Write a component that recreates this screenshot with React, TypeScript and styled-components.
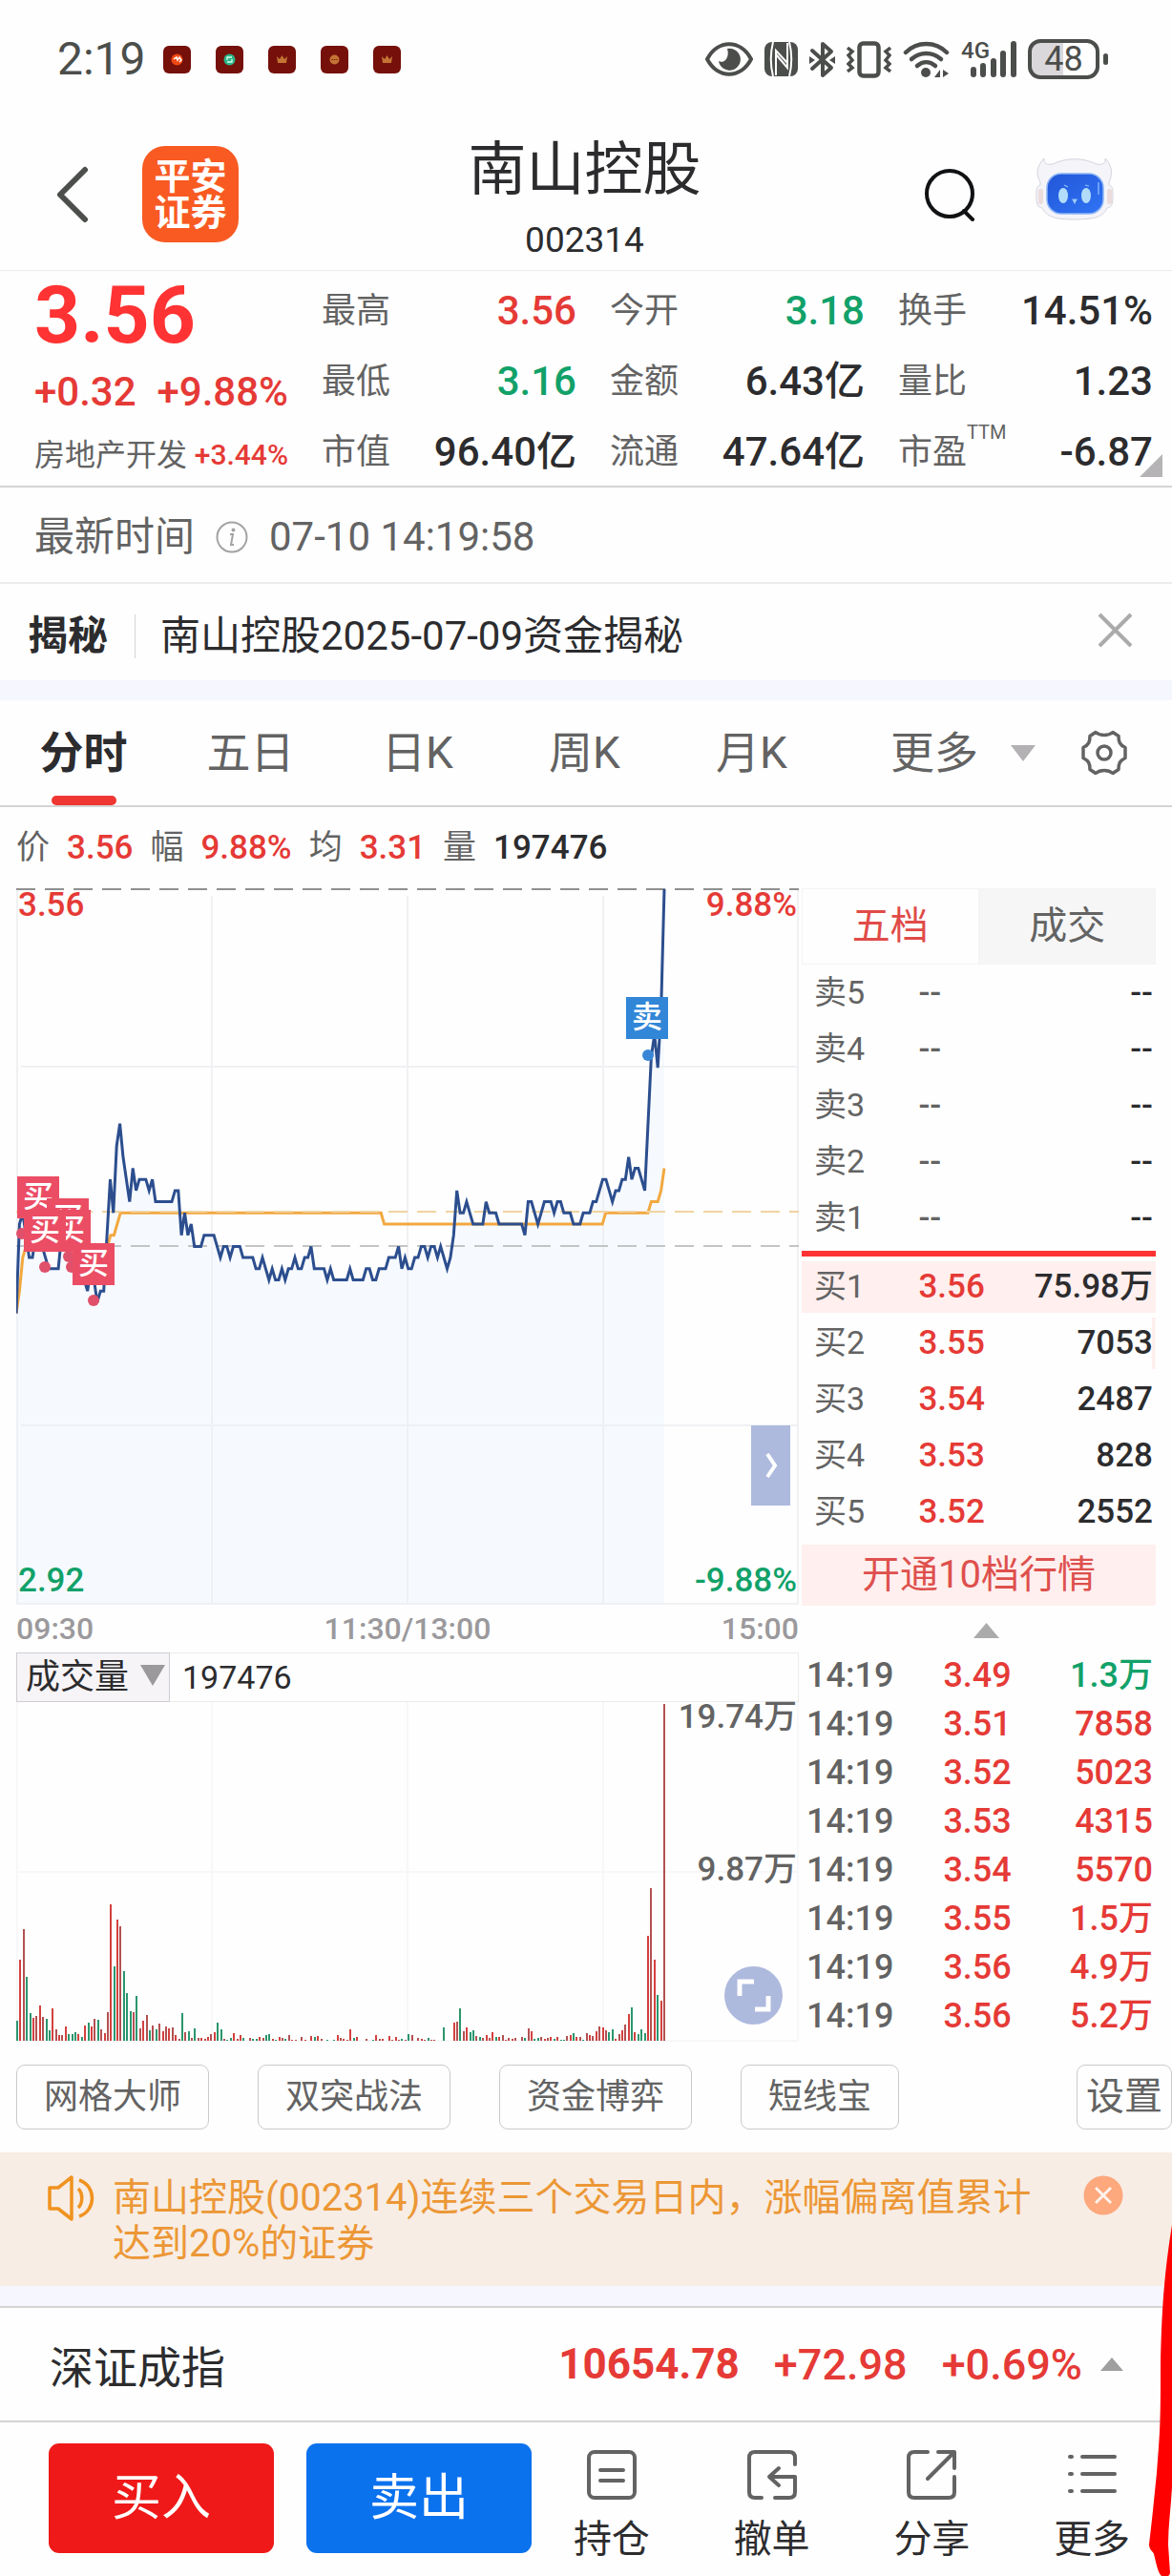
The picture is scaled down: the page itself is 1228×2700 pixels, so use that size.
import React from 'react';
import styled, { createGlobalStyle, css } from 'styled-components';

const color = {
  red: '#e53a36',
  strongRed: '#ff3333',
  green: '#11a169',
  ink: '#2c2c2e',
  grey: '#636363',
  faint: '#9b999c',
  status: '#4b4e4b',
  line: '#d4d4d4',
  hair: '#ececec',
  band: '#f5f6fe',
  pink: '#ffefee',
  lilac: '#adb9dd',
};

type Tone = 'red' | 'green' | 'ink' | 'grey';

const GlobalStyle = createGlobalStyle`
  * { box-sizing: border-box; }
  body {
    margin: 0;
    background: #fefefe;
    color: ${color.ink};
    font-family: Roboto, "Noto Sans CJK SC", sans-serif;
  }
  button, select {
    font: inherit;
    color: inherit;
    margin: 0;
    padding: 0;
    border: 0;
    background: none;
  }
  button { cursor: pointer; }
  h1, p { margin: 0; font-weight: 400; }
  svg { display: block; flex: none; }
  table { border-collapse: collapse; width: 100%; }
  td, th { padding: 0; font-weight: 400; text-align: left; }
`;

const Page = styled.div`
  position: relative;
  overflow: hidden;
`;

/* ---------- status bar ---------- */

const StatusBar = styled.div`
  display: flex;
  align-items: center;
  height: 124px;
  padding: 0 76px 0 60px;
  color: ${color.status};
`;

const Clock = styled.span`
  width: 111px;
  font-size: 48px;
  line-height: 60px;
`;

const Notifications = styled.div`
  display: flex;
  gap: 26px;
  flex: 1;
`;

const Signals = styled.div`
  display: flex;
  align-items: center;
  gap: 12px;
`;

const Cell = styled.div`
  display: flex;
  align-items: flex-start;
  height: 40px;
`;

const Network = styled.span`
  font-size: 24px;
  line-height: 22px;
  font-weight: 500;
  margin-right: -20px;
`;

const Battery = styled.span`
  position: relative;
  width: 75px;
  height: 42px;
  border: 4px solid ${color.status};
  border-radius: 13px;
  background: linear-gradient(90deg, #dbd8db 50%, #fefefe 50%);
  font-size: 36px;
  line-height: 34px;
  text-align: center;
  &::after {
    content: '';
    position: absolute;
    right: -13px;
    top: 11px;
    width: 5px;
    height: 12px;
    border-radius: 3px;
    background: ${color.status};
  }
`;

/* ---------- header ---------- */

const Header = styled.header`
  display: grid;
  grid-template-columns: 1fr auto 1fr;
  align-items: center;
  height: 160px;
  padding: 0 61px 0 58px;
  border-bottom: 1px solid ${color.hair};
`;

const HeaderSide = styled.div<{ $end?: boolean }>`
  display: flex;
  align-items: center;
  gap: ${(p) => (p.$end ? 62 : 56)}px;
  justify-content: ${(p) => (p.$end ? 'flex-end' : 'flex-start')};
`;

const Logo = styled.div`
  display: grid;
  place-content: center;
  width: 101px;
  height: 101px;
  border-radius: 24px;
  background: #f85a22;
  color: #fff;
  font-size: 38px;
  line-height: 38px;
  font-weight: 700;
  text-align: center;
`;

const TitleBlock = styled.div`
  display: flex;
  flex-direction: column;
  gap: 10px;
  padding-top: 6px;
  text-align: center;
`;

const Title = styled.h1`
  font-size: 61px;
  line-height: 80px;
`;

const Code = styled.p`
  font-size: 37px;
  line-height: 48px;
`;

/* ---------- quote ---------- */

const Quote = styled.section`
  position: relative;
  display: grid;
  grid-template-columns: 266px 1fr;
  column-gap: 35px;
  height: 227px;
  padding: 5px 20px 0 36px;
  border-bottom: 2px solid ${color.line};
`;

const PriceBlock = styled.div`
  display: flex;
  flex-direction: column;
  color: ${color.red};
`;

const BigPrice = styled.strong`
  font-size: 84px;
  line-height: 84px;
  font-weight: 700;
  color: ${color.strongRed};
`;

const Change = styled.div`
  display: flex;
  justify-content: space-between;
  font-size: 42px;
  line-height: 76px;
  font-weight: 500;
`;

const Industry = styled.div`
  display: flex;
  justify-content: space-between;
  font-size: 30px;
  line-height: 56px;
  font-weight: 500;
  white-space: nowrap;
  & > span:first-child {
    font-size: 32px;
    font-weight: 400;
    color: ${color.grey};
  }
`;

const Metrics = styled.div`
  display: grid;
  grid-template-columns: repeat(3, 1fr);
  grid-auto-rows: 74px;
  column-gap: 35px;
`;

const Metric = styled.div`
  display: flex;
  justify-content: space-between;
  font-size: 36px;
  line-height: 74px;
  color: ${color.grey};
  white-space: nowrap;
`;

const MetricValue = styled.span<{ $tone: Tone }>`
  font-size: 42px;
  font-weight: 500;
  color: ${(p) => color[p.$tone]};
`;

const Sup = styled.sup`
  font-size: 20px;
  line-height: 20px;
  vertical-align: 26px;
`;

const Corner = styled.span`
  position: absolute;
  right: 10px;
  bottom: 9px;
  border-style: solid;
  border-width: 0 0 24px 24px;
  border-color: transparent transparent #b5b3b6;
`;

/* ---------- info rows ---------- */

const InfoRow = styled.div<{ $news?: boolean }>`
  display: flex;
  align-items: center;
  height: 101px;
  padding: ${(p) => (p.$news ? '8px 41px 0 29px' : '4px 36px 0')};
  gap: 22px;
  font-size: 42px;
  line-height: 60px;
  color: ${(p) => (p.$news ? color.ink : color.grey)};
  border-bottom: ${(p) => (p.$news ? 0 : 2)}px solid ${color.hair};
`;

const Tag = styled.strong`
  padding-right: 28px;
  margin-right: 4px;
  line-height: 46px;
  border-right: 1px solid ${color.line};
`;

const Grow = styled.span`
  flex: 1;
`;

const Band = styled.div`
  height: 21px;
  background: ${color.band};
`;

/* ---------- period tabs ---------- */

const Periods = styled.nav`
  display: flex;
  height: 112px;
  padding-right: 47px;
  border-bottom: 2px solid ${color.line};
  color: ${color.grey};
`;

const Period = styled.button<{ $active?: boolean }>`
  position: relative;
  flex: 1;
  font-size: 46px;
  line-height: 110px;
  ${(p) =>
    p.$active &&
    css`
      font-weight: 700;
      color: ${color.ink};
      &::after {
        content: '';
        position: absolute;
        left: calc(50% - 34px);
        bottom: 0;
        width: 68px;
        height: 10px;
        border-radius: 5px;
        background: #ef3632;
      }
    `}
`;

const MorePeriods = styled.button`
  display: flex;
  align-items: center;
  gap: 34px;
  margin: 0 48px 0 58px;
  font-size: 46px;
  line-height: 110px;
`;

const IconButton = styled.button<{ $raised?: boolean }>`
  display: flex;
  align-items: center;
  padding-bottom: ${(p) => (p.$raised ? 12 : 0)}px;
`;

/* ---------- chart area ---------- */

const Summary = styled.div`
  display: flex;
  gap: 18px;
  padding: 0 17px;
  font-size: 35px;
  line-height: 85px;
  color: ${color.grey};
`;

const Value = styled.span<{ $tone: Tone }>`
  font-weight: 500;
  color: ${(p) => color[p.$tone]};
`;

const Board = styled.div`
  display: grid;
  grid-template-columns: 820fr 371fr;
  column-gap: 3px;
  padding: 0 17px;
`;

const Plot = styled.div`
  position: relative;
  & > svg {
    width: 100%;
    height: auto;
  }
`;

const PlotLabel = styled.span<{ $tone: Tone; $right?: boolean; $top: string }>`
  position: absolute;
  top: ${(p) => p.$top};
  ${(p) => (p.$right ? 'right: 2px;' : 'left: 2px;')}
  font-size: 35px;
  line-height: 36px;
  font-weight: 500;
  color: ${(p) => color[p.$tone]};
`;

const Pin = styled.span<{ $sell?: boolean }>`
  position: absolute;
  width: 44px;
  height: 44px;
  font-size: 32px;
  line-height: 42px;
  font-weight: 500;
  text-align: center;
  color: #fff;
  background: ${(p) => (p.$sell ? '#3186d8' : '#eb4d65')};
`;

const Collapse = styled.button`
  position: absolute;
  right: 9px;
  top: 75%;
  display: grid;
  place-items: center;
  width: 41px;
  height: 84px;
  background: ${color.lilac};
`;

const TimeAxis = styled.div`
  display: flex;
  justify-content: space-between;
  font-size: 32px;
  line-height: 50px;
  font-weight: 500;
  color: ${color.faint};
`;

const VolumeBar = styled.div`
  display: flex;
  height: 52px;
  border: 1px solid ${color.hair};
  font-size: 34px;
  line-height: 50px;
`;

const Picker = styled.label`
  display: flex;
  align-items: center;
  width: 161px;
  margin: -1px 13px -1px -1px;
  padding: 0 4px 0 9px;
  border: 1px solid #cfcdd3;
  background: #f7f4f8;
  & select {
    appearance: none;
    flex: 1;
    min-width: 0;
    font-size: 36px;
    line-height: 50px;
  }
  & svg {
    margin-bottom: 4px;
  }
`;

const Expand = styled.button`
  position: absolute;
  right: 17px;
  bottom: 18px;
`;

/* ---------- order book ---------- */

const BookTabs = styled.div`
  display: grid;
  grid-template-columns: 1fr 1fr;
`;

const BookTab = styled.button<{ $active?: boolean }>`
  font-size: 40px;
  line-height: 78px;
  border: 1px solid #f4f4f4;
  color: ${(p) => (p.$active ? '#e04b48' : color.grey)};
  background: ${(p) => (p.$active ? '#fefefe' : '#f6f6f6')};
`;

const BookTable = styled.table`
  font-size: 35px;
  & th {
    width: 33%;
    padding-left: 13px;
    font-size: 34px;
    color: ${color.grey};
  }
  & td:last-child {
    text-align: right;
    padding-right: 3px;
  }
`;

const BookRow = styled.tr<{ $depth?: number }>`
  height: 59px;
  background: linear-gradient(${color.pink}, ${color.pink}) right center / ${(p) => p.$depth ?? 0}% 54px no-repeat;
  & td, & th {
    line-height: 59px;
  }
`;

const Divider = styled.div`
  height: 6px;
  margin: 5px 0 2px;
  background: ${color.strongRed};
`;

const Level = styled.button`
  display: block;
  width: 100%;
  margin-top: 5px;
  font-size: 40px;
  line-height: 64px;
  color: #de504d;
  background: ${color.pink};
`;

const Fold = styled.button`
  display: grid;
  place-items: center;
  width: 100%;
  height: 47px;
  padding: 4px 0 0 16px;
`;

const TradeTable = styled.table`
  font-size: 36px;
  & tr {
    height: 51px;
  }
  & td {
    line-height: 50px;
  }
  & td:first-child {
    width: 40%;
    padding-left: 5px;
  }
  & td:last-child {
    text-align: right;
    padding-right: 3px;
  }
`;

/* ---------- tools and notice ---------- */

const Tools = styled.div`
  display: flex;
  gap: 51px;
  padding: 24px 0 24px 17px;
`;

const Tool = styled.button<{ $last?: boolean }>`
  height: 68px;
  padding: 0 ${(p) => (p.$last ? 9 : 28)}px;
  border: 1px solid #cacaca;
  border-radius: 9px;
  font-size: ${(p) => (p.$last ? 40 : 36)}px;
  line-height: 64px;
  color: ${color.grey};
  white-space: nowrap;
  ${(p) => p.$last && 'margin-left: auto;'}
`;

const Notice = styled.section`
  display: flex;
  align-items: flex-start;
  gap: 18px;
  height: 140px;
  padding: 24px 51px 0 50px;
  background: #f7ede4;
  color: #ec9736;
`;

const NoticeText = styled.p`
  flex: 1;
  font-size: 40px;
  line-height: 48px;
`;

const IndexRow = styled.section`
  display: flex;
  align-items: center;
  height: 122px;
  padding: 0 51px 0 52px;
  border-top: 2px solid ${color.line};
  border-bottom: 2px solid ${color.line};
  font-size: 45px;
  font-weight: 500;
  color: ${color.red};
`;

const IndexName = styled.span`
  flex: 1;
  font-size: 46px;
  font-weight: 400;
  color: ${color.ink};
`;

const IndexValue = styled.span<{ $strong?: boolean }>`
  margin-right: 36px;
  font-size: ${(p) => (p.$strong ? 44 : 45)}px;
  font-weight: ${(p) => (p.$strong ? 700 : 500)};
  &:nth-of-type(4) {
    margin-right: 19px;
  }
`;

/* ---------- action bar ---------- */

const Actions = styled.footer`
  display: flex;
  padding: 22px 0 24px 51px;
`;

const TradeButton = styled.button<{ $sell?: boolean }>`
  width: 236px;
  height: 115px;
  margin-right: ${(p) => (p.$sell ? 0 : 34)}px;
  border-radius: 11px;
  font-size: 52px;
  line-height: 114px;
  color: #fff;
  background: ${(p) => (p.$sell ? '#0b72ee' : '#ef1919')};
`;

const Action = styled.button`
  display: flex;
  flex: 1;
  flex-direction: column;
  align-items: center;
  gap: 14px;
  padding-top: 7px;
  font-size: 40px;
  line-height: 56px;
`;

const Stroke = styled.svg`
  position: absolute;
  right: 0;
  bottom: 12px;
`;

/* ---------- data ---------- */

const metrics: { label: string; value: string; tone: Tone; sup?: string }[] = [
  { label: '最高', value: '3.56', tone: 'red' },
  { label: '今开', value: '3.18', tone: 'green' },
  { label: '换手', value: '14.51%', tone: 'ink' },
  { label: '最低', value: '3.16', tone: 'green' },
  { label: '金额', value: '6.43亿', tone: 'ink' },
  { label: '量比', value: '1.23', tone: 'ink' },
  { label: '市值', value: '96.40亿', tone: 'ink' },
  { label: '流通', value: '47.64亿', tone: 'ink' },
  { label: '市盈', value: '-6.87', tone: 'ink', sup: 'TTM' },
];

const bids = [
  { label: '买1', price: '3.56', size: '75.98万', depth: 100 },
  { label: '买2', price: '3.55', size: '7053', depth: 1 },
  { label: '买3', price: '3.54', size: '2487', depth: 0 },
  { label: '买4', price: '3.53', size: '828', depth: 0 },
  { label: '买5', price: '3.52', size: '2552', depth: 0 },
];

const trades: [string, string, Tone][] = [
  ['3.49', '1.3万', 'green'],
  ['3.51', '7858', 'red'],
  ['3.52', '5023', 'red'],
  ['3.53', '4315', 'red'],
  ['3.54', '5570', 'red'],
  ['3.55', '1.5万', 'red'],
  ['3.56', '4.9万', 'red'],
  ['3.56', '5.2万', 'red'],
];

/* Each pair is [cents below the day's high, minutes held]. */
const priceRuns: [number, number][] = [
  [38, 1], [30, 1], [29, 1], [31, 1], [33, 2], [31, 2], [32, 1], [33, 1], [34, 4], [31, 2], [32, 1],
  [33, 1], [34, 3], [35, 1], [36, 1], [34, 1], [35, 1], [37, 1], [36, 2], [31, 1], [26, 1], [29, 1],
  [23, 1], [21, 1], [24, 1], [26, 1], [28, 1], [25, 1], [27, 1], [26, 3], [27, 1], [26, 1], [28, 6],
  [27, 2], [31, 1], [29, 1], [31, 1], [30, 1], [32, 3], [31, 4], [32, 1], [33, 1], [32, 2], [33, 1],
  [32, 3], [33, 4], [34, 2], [33, 1], [34, 1], [35, 1], [34, 1], [35, 2], [34, 1], [35, 1], [34, 2],
  [33, 1], [34, 2], [33, 2], [32, 1], [34, 4], [35, 1], [34, 1], [35, 5], [34, 1], [35, 4], [34, 2],
  [35, 2], [34, 3], [33, 3], [32, 1], [34, 1], [33, 1], [34, 2], [33, 2], [32, 2], [33, 1], [32, 2],
  [33, 1], [32, 1], [33, 1], [34, 1], [33, 1], [31, 1], [27, 1], [29, 2], [28, 1], [29, 1], [30, 4],
  [28, 1], [29, 3], [30, 8], [31, 1], [28, 2], [29, 1], [30, 1], [29, 1], [28, 3], [29, 1], [28, 2],
  [29, 3], [30, 3], [29, 3], [28, 2], [27, 1], [26, 2], [27, 1], [28, 1], [27, 2], [26, 2], [24, 1],
  [26, 1], [25, 2], [26, 1], [27, 1], [21, 1], [15, 1], [13, 1], [16, 1], [11, 1], [0, 1],
];

const averageRuns: [number, number][] = [
  [38, 1], [36, 1], [33, 1], [32, 25], [32, 1], [31, 2], [30, 1], [29, 81], [30, 68], [29, 14], [28, 3], [27, 1], [25, 1],
];

/* Bar heights per minute; a negative figure is a falling minute. */
const volumes = [
  -21, 85, 117, -67, -29, 24, 26, 37, 25, -23, -11, 34, 12, 6, 6, 15, -7, -7, -9, 7,
  -4, 16, -19, 15, 23, -22, 12, 8, 30, 143, -78, 127, 120, -73, -50, -31, 30, -47, 13, 21,
  27, -11, 16, -12, 18, 10, 15, 13, 14, 6, 2, -29, 9, -10, 3, -13,
  3, 3, 2, 4, 7, 9, -19, -12, 2, -1,
  -3, 8, 2, 6, -3, 0, 3, -2, -2, 4,
  3, -6, -7, 2, -1, 4, 3, -2, 6, 1,
  1, 0, 4, 1, 0, 5, -4, 5, 2, 0,
  -1, 0, -1, 6, 3, 2, 1, 12, -3, 4,
  0, 0, 2, 0, -1, 6, 2, 2, 0, 5,
  1, 4, 1, -2, 1, -7, 6, 0, 3, 2,
  1, -3, 1, 1, 0, 0, -14, 0, 0, 19,
  20, -34, 10, 14, -9, -11, 5, -4, 3, 6,
  3, 9, -4, 4, 6, 1, 3, 2, 3, 0,
  4, -3, 13, 10, -2, -3, 4, 2, 3, 4,
  -2, 4, -1, -1, 5, 6, -8, 4, 4, -1,
  8, 6, 5, 10, 15, 14, 11, -9, -12, 2,
  7, 11, 17, 28, -35, 9, -7, -12, -8, 110,
  160, 85, -48, 42, 353,
];

const LAST_X = 679;
const TOP_Y = 1;
const CENT = 11.7;

const expand = (runs: [number, number][]) => runs.flatMap(([v, n]) => Array<number>(n).fill(v));

const toPoints = (runs: [number, number][]) => {
  const levels = expand(runs);
  return levels
    .map((v, i) => `${((i / (levels.length - 1)) * LAST_X).toFixed(1)},${(TOP_Y + v * CENT).toFixed(1)}`)
    .join(' ');
};

const pins = [
  { x: 1, y: 302 },
  { x: 32, y: 325 },
  { x: 34, y: 337 },
  { x: 8, y: 337 },
  { x: 59, y: 372 },
];

const dots = [
  [6, 362], [30, 397], [55, 386], [58, 397], [81, 432],
];

/* ---------- drawings ---------- */

const AppBadge = ({ kind }: { kind: 'swirl' | 'square' | 'crown' | 'dots' }) => (
  <svg width="29" height="29" viewBox="0 0 29 29">
    <rect width="29" height="29" rx="6" fill="#75100b" />
    {kind === 'swirl' && (
      <>
        <circle cx="14.500" cy="14.500" r="6" fill="#ee4812" />
        <path d="M11 14l3-2 1 3 2-3 2 3-2 2" stroke="#fff" strokeWidth="1.500" fill="none" />
      </>
    )}
    {kind === 'square' && (
      <>
        <circle cx="14.500" cy="14.500" r="6" fill="#2bb287" />
        <path d="M12 15v-3h5M17 14v3h-5" stroke="#d9fff0" strokeWidth="1.300" fill="none" />
      </>
    )}
    {kind === 'crown' && <path d="M9 11l3 3 2.500-4 2.500 4 3-3-1 7h-9z" fill="#c47434" />}
    {kind === 'dots' && (
      <>
        <circle cx="14.500" cy="14.500" r="5" fill="#c47434" />
        <path d="M11.500 14.500h6" stroke="#75100b" strokeWidth="1.200" strokeDasharray="1.400 1" />
      </>
    )}
  </svg>
);

const EyeIcon = () => (
  <svg width="50" height="36" viewBox="0 0 50 36">
    <path d="M2 18C13-3 37-3 48 18 37 39 13 39 2 18z" fill="none" stroke={color.status} strokeWidth="4" />
    <path d="M23 7a11.500 11.500 0 1 1-9 13c5 3 12-3 9-13z" fill={color.status} />
  </svg>
);

const NfcIcon = () => (
  <svg width="35" height="36" viewBox="0 0 35 36">
    <rect width="35" height="36" rx="8" fill={color.status} />
    <path d="M9 0C6 12 6 24 9 36M26 0c3 12 3 24 0 36" stroke="#fefefe" strokeWidth="2" fill="none" />
    <path d="M12 35V9l12 13M24 1v26L12 13" stroke="#fefefe" strokeWidth="2" fill="none" />
  </svg>
);

const BluetoothIcon = () => (
  <svg width="27" height="39" viewBox="0 0 27 39">
    <path d="M3 10l20 18-9 8V3l9 8L3 29" fill="none" stroke={color.status} strokeWidth="4" strokeLinejoin="round" strokeLinecap="round" />
    <path d="M0 16l6 4-6 4zM27 16l-6 4 6 4z" fill={color.status} />
  </svg>
);

const VibrateIcon = () => (
  <svg width="47" height="39" viewBox="0 0 47 39">
    <rect x="13.500" y="2.500" width="20" height="34" rx="4" fill="none" stroke={color.status} strokeWidth="4.500" />
    <path d="M1 7l5 4-4 4 4 5-4 4 4 4-5 4M46 7l-5 4 4 4-4 5 4 4-4 4 5 4" fill="none" stroke={color.status} strokeWidth="3.500" />
  </svg>
);

const WifiIcon = () => (
  <svg width="49" height="39" viewBox="0 0 49 39">
    <g fill="none" stroke={color.status} strokeWidth="4.500" strokeLinecap="round">
      <path d="M3 12c12-12 31-12 43 0" />
      <path d="M9 19c9-8 22-8 31 0" />
      <path d="M15 26c6-5 13-5 19 0" />
    </g>
    <circle cx="24" cy="33" r="5" fill={color.status} />
    <path d="M39 30v8h-6zM42 30l6 4-6 4z" fill={color.status} />
  </svg>
);

const BarsIcon = () => (
  <svg width="48" height="40" viewBox="0 0 48 40">
    <path d="M3 31v5M13 27v9M24 22v14M34 14v22M45 4v32" stroke={color.status} strokeWidth="6" strokeLinecap="round" />
  </svg>
);

const Robot = () => (
  <svg width="82" height="66" viewBox="0 0 82 66">
    <defs>
      <linearGradient id="visor" x1="0" y1="0" x2="1" y2="1">
        <stop offset="0" stopColor="#2356d8" />
        <stop offset="1" stopColor="#2f74f5" />
      </linearGradient>
    </defs>
    <path
      d="M9 1c-1 6 4 7 9 6 14-7 32-7 46 0 5 1 10 0 9-6 6 6 9 15 4 25v3c4 1 4 4 4 12s-1 11-6 12c-4 9-12 12-34 12S12 62 7 53c-5-1-6-4-6-12s0-11 4-12v-3C-1 16 3 7 9 1z"
      fill="#f4f4f9"
      stroke="#d4d4de"
      strokeWidth="1"
    />
    <rect x="3" y="33" width="5" height="16" rx="2" fill="#ecdcdc" />
    <rect x="75" y="33" width="5" height="16" rx="2" fill="#ecdcdc" />
    <rect x="12" y="17" width="59" height="42" rx="15" fill="url(#visor)" stroke="#8db4f4" strokeWidth="1.500" />
    <ellipse cx="29" cy="40" rx="5" ry="8" fill="#b3dcfa" />
    <ellipse cx="53" cy="40" rx="5" ry="8" fill="#b3dcfa" />
    <path d="M39 44h4l-2 4zM30 29l4 2M52 29l4 1" fill="#b3dcfa" stroke="#8fc2f6" strokeWidth="1.200" />
    <path d="M66 26v13" stroke="#6d9df7" strokeWidth="2" />
  </svg>
);

const Triangle = ({ w, h, up, fill = '#b3b1b4' }: { w: number; h: number; up?: boolean; fill?: string }) => (
  <svg width={w} height={h} viewBox="0 0 10 10" preserveAspectRatio="none">
    <path d={up ? 'M5 0l5 10H0z' : 'M0 0h10L5 10z'} fill={fill} />
  </svg>
);

const GearIcon = () => (
  <svg width="48" height="48" viewBox="0 0 48 48" fill="none" stroke={color.grey} strokeWidth="3.500" strokeLinejoin="round">
    <path d="M15 2.500c5 4 13 4 18 0l6 4c0 6 1 9 7 12v11c-6 3-7 6-7 12l-6 4c-5-4-13-4-18 0l-6-4c0-6-1-9-7-12v-11c6-3 7-6 7-12z" />
    <circle cx="24" cy="24" r="7" />
  </svg>
);

const PriceChart = () => {
  const price = toPoints(priceRuns);
  return (
    <Plot>
      <svg viewBox="0 0 820 751" role="img" aria-label="分时走势">
        <polygon points={`0,750 ${price} ${LAST_X},750`} fill="#f6faff" />
        <g stroke="#ececf0" strokeWidth="2" opacity="0.75" fill="none">
          <path d="M205 8v742M410 8v742M615 8v742M5 187h814M5 563h814M1 0v750h818V0" />
        </g>
        <g strokeWidth="2" strokeDasharray="20 10">
          <path d="M0 1h820" stroke="#8f8f8f" />
          <path d="M0 375h820" stroke="#c4c4c4" />
        </g>
        <polyline points={toPoints(averageRuns)} fill="none" stroke="#f2a840" strokeWidth="3" />
        <path d="M0 339h820" stroke="#f1d3a0" strokeWidth="2" strokeDasharray="20 10" />
        <polyline points={price} fill="none" stroke="#2c4e8e" strokeWidth="3" />
        {dots.map(([x, y]) => (
          <circle key={`${x}-${y}`} cx={x} cy={y} r="6" fill="#e0506a" />
        ))}
        <circle cx="662" cy="175" r="6" fill="#3a86d6" />
      </svg>
      {pins.map((p) => (
        <Pin key={`${p.x}-${p.y}`} style={{ left: `${(p.x / 820) * 100}%`, top: `${(p.y / 751) * 100}%` }}>
          买
        </Pin>
      ))}
      <Pin $sell style={{ left: `${(639 / 820) * 100}%`, top: `${(114 / 751) * 100}%` }}>
        卖
      </Pin>
      <PlotLabel $tone="red" $top="0">3.56</PlotLabel>
      <PlotLabel $tone="red" $right $top="0">9.88%</PlotLabel>
      <PlotLabel $tone="green" $top="calc(100% - 43px)">2.92</PlotLabel>
      <PlotLabel $tone="green" $right $top="calc(100% - 43px)">-9.88%</PlotLabel>
      <Collapse aria-label="收起盘口">
        <svg width="14" height="28" viewBox="0 0 14 28">
          <path d="M3 2l8 12-8 12" fill="none" stroke="#fff" strokeWidth="4" />
        </svg>
      </Collapse>
    </Plot>
  );
};

const VolumeChart = () => (
  <Plot>
    <svg viewBox="0 0 820 356" role="img" aria-label="成交量">
      <path d="M205 0v355M410 0v355M615 0v355M1 0v355h818V0M0 178h820" stroke="#f7f7f9" strokeWidth="2" fill="none" />
      {volumes.map((v, i) => (
        <rect
          key={i}
          x={Math.round((i / (volumes.length - 1)) * (LAST_X - 1))}
          y={355 - Math.abs(v)}
          width="2"
          height={Math.abs(v)}
          fill={v < 0 ? '#2b966d' : i % 2 ? '#d3413f' : '#b35152'}
          shapeRendering="crispEdges"
        />
      ))}
    </svg>
    <PlotLabel $tone="grey" $right $top="-2px">19.74万</PlotLabel>
    <PlotLabel $tone="grey" $right $top="158px">9.87万</PlotLabel>
    <Expand aria-label="全屏">
      <svg width="61" height="61" viewBox="0 0 61 61">
        <circle cx="30.500" cy="30.500" r="30.500" fill={color.lilac} />
        <path d="M16 31V16h15M32 45h14V31" fill="none" stroke="#fff" strokeWidth="5" />
      </svg>
    </Expand>
  </Plot>
);

const actionIcons: Record<string, React.ReactNode> = {
  持仓: (
    <>
      <rect x="2" y="2" width="48" height="48" rx="6" />
      <path d="M14 21h24M14 32h24" />
    </>
  ),
  撤单: (
    <>
      <path d="M50 15V8c0-4-2-6-6-6H8C4 2 2 4 2 8v36c0 4 2 6 6 6h7M29 50h15c4 0 6-2 6-6V28H24" />
      <path d="M33 19l-10 9 10 9" />
    </>
  ),
  分享: (
    <>
      <path d="M22 2H8C4 2 2 4 2 8v36c0 4 2 6 6 6h36c4 0 6-2 6-6V28" />
      <path d="M33 2h17v17M49 3L22 30" />
    </>
  ),
  更多: (
    <path d="M16 7h34M16 25h34M16 43h34M3 7h2M3 25h2M3 43h2" />
  ),
};

/* ---------- page ---------- */

export default function App() {
  return (
    <Page>
      <GlobalStyle />
      <StatusBar>
        <Clock>2:19</Clock>
        <Notifications>
          <AppBadge kind="swirl" />
          <AppBadge kind="square" />
          <AppBadge kind="crown" />
          <AppBadge kind="dots" />
          <AppBadge kind="crown" />
        </Notifications>
        <Signals>
          <EyeIcon />
          <NfcIcon />
          <BluetoothIcon />
          <VibrateIcon />
          <WifiIcon />
          <Cell>
            <Network>4G</Network>
            <BarsIcon />
          </Cell>
          <Battery>48</Battery>
        </Signals>
      </StatusBar>

      <Header>
        <HeaderSide>
          <IconButton aria-label="返回">
            <svg width="35" height="60" viewBox="0 0 35 60">
              <path d="M31 4L5 30l26 26" fill="none" stroke={color.status} strokeWidth="6" strokeLinecap="round" strokeLinejoin="round" />
            </svg>
          </IconButton>
          <Logo>
            <span>平安</span>
            <span>证券</span>
          </Logo>
        </HeaderSide>
        <TitleBlock>
          <Title>南山控股</Title>
          <Code>002314</Code>
        </TitleBlock>
        <HeaderSide $end>
          <IconButton aria-label="搜索">
            <svg width="56" height="56" viewBox="0 0 56 56" fill="none" stroke="#101214" strokeWidth="4">
              <circle cx="28" cy="27" r="24" />
              <path d="M43 45l9 9" strokeLinecap="round" />
            </svg>
          </IconButton>
          <IconButton $raised aria-label="智能助手">
            <Robot />
          </IconButton>
        </HeaderSide>
      </Header>

      <Quote>
        <PriceBlock>
          <BigPrice>3.56</BigPrice>
          <Change>
            <span>+0.32</span>
            <span>+9.88%</span>
          </Change>
          <Industry>
            <span>房地产开发</span>
            <span>+3.44%</span>
          </Industry>
        </PriceBlock>
        <Metrics>
          {metrics.map((m) => (
            <Metric key={m.label}>
              <span>
                {m.label}
                {m.sup && <Sup>{m.sup}</Sup>}
              </span>
              <MetricValue $tone={m.tone}>{m.value}</MetricValue>
            </Metric>
          ))}
        </Metrics>
        <Corner />
      </Quote>

      <InfoRow>
        <span>最新时间</span>
        <svg width="34" height="34" viewBox="0 0 34 34" fill="none" stroke="#a3a3a3" strokeWidth="2">
          <circle cx="17" cy="17" r="15.500" />
          <path d="M15 14h3l-2 11h3" />
          <circle cx="18.500" cy="9.500" r="1" />
        </svg>
        <span>07-10 14:19:58</span>
      </InfoRow>
      <InfoRow $news>
        <Tag>揭秘</Tag>
        <Grow>南山控股2025-07-09资金揭秘</Grow>
        <IconButton $raised aria-label="关闭">
          <svg width="37" height="37" viewBox="0 0 37 37">
            <path d="M2 2l33 33M35 2L2 35" stroke="#ababab" strokeWidth="4" />
          </svg>
        </IconButton>
      </InfoRow>
      <Band />

      <Periods>
        <Period $active>分时</Period>
        <Period>五日</Period>
        <Period>日K</Period>
        <Period>周K</Period>
        <Period>月K</Period>
        <MorePeriods>
          更多
          <Triangle w={26} h={17} />
        </MorePeriods>
        <IconButton aria-label="图表设置">
          <GearIcon />
        </IconButton>
      </Periods>

      <Summary>
        <span>价</span>
        <Value $tone="red">3.56</Value>
        <span>幅</span>
        <Value $tone="red">9.88%</Value>
        <span>均</span>
        <Value $tone="red">3.31</Value>
        <span>量</span>
        <Value $tone="ink">197476</Value>
      </Summary>

      <Board>
        <div>
          <PriceChart />
          <TimeAxis>
            <span>09:30</span>
            <span>11:30/13:00</span>
            <span>15:00</span>
          </TimeAxis>
          <VolumeBar>
            <Picker>
              <select aria-label="指标">
                <option>成交量</option>
              </select>
              <Triangle w={26} h={22} fill="#9b999c" />
            </Picker>
            <span>197476</span>
          </VolumeBar>
          <VolumeChart />
        </div>
        <div>
          <BookTabs>
            <BookTab $active>五档</BookTab>
            <BookTab>成交</BookTab>
          </BookTabs>
          <BookTable>
            <tbody>
              {[5, 4, 3, 2, 1].map((n) => (
                <BookRow key={n}>
                  <th scope="row">{`卖${n}`}</th>
                  <td><Value $tone="grey">--</Value></td>
                  <td><Value $tone="ink">--</Value></td>
                </BookRow>
              ))}
            </tbody>
          </BookTable>
          <Divider />
          <BookTable>
            <tbody>
              {bids.map((b) => (
                <BookRow key={b.label} $depth={b.depth}>
                  <th scope="row">{b.label}</th>
                  <td><Value $tone="red">{b.price}</Value></td>
                  <td><Value $tone="ink">{b.size}</Value></td>
                </BookRow>
              ))}
            </tbody>
          </BookTable>
          <Level>开通10档行情</Level>
          <Fold aria-label="收起">
            <Triangle w={27} h={16} up fill="#ababab" />
          </Fold>
          <TradeTable>
            <tbody>
              {trades.map(([price, size, tone], i) => (
                <tr key={i}>
                  <td><Value $tone="grey">14:19</Value></td>
                  <td><Value $tone="red">{price}</Value></td>
                  <td><Value $tone={tone}>{size}</Value></td>
                </tr>
              ))}
            </tbody>
          </TradeTable>
        </div>
      </Board>

      <Tools>
        <Tool>网格大师</Tool>
        <Tool>双突战法</Tool>
        <Tool>资金博弈</Tool>
        <Tool>短线宝</Tool>
        <Tool $last>设置</Tool>
      </Tools>

      <Notice>
        <svg width="50" height="48" viewBox="0 0 50 48" fill="none" stroke="#f0921f" strokeWidth="3.500" strokeLinejoin="round">
          <path d="M2 13h9L25 2v44L11 35H2z" />
          <path d="M32 14c5 5 5 15 0 20M33 5c18 6 18 32 0 38" />
        </svg>
        <NoticeText>南山控股(002314)连续三个交易日内，涨幅偏离值累计达到20%的证券</NoticeText>
        <IconButton aria-label="关闭提示">
          <svg width="42" height="42" viewBox="0 0 42 42">
            <circle cx="21" cy="21" r="20.500" fill="#fda87d" />
            <path d="M13 13l16 16M29 13L13 29" stroke="#fff3ec" strokeWidth="3" />
          </svg>
        </IconButton>
      </Notice>
      <Band />

      <IndexRow>
        <IndexName>深证成指</IndexName>
        <IndexValue $strong>10654.78</IndexValue>
        <IndexValue>+72.98</IndexValue>
        <IndexValue>+0.69%</IndexValue>
        <Triangle w={24} h={14} up fill="#9f9f9f" />
      </IndexRow>

      <Actions>
        <TradeButton>买入</TradeButton>
        <TradeButton $sell>卖出</TradeButton>
        {Object.entries(actionIcons).map(([name, icon]) => (
          <Action key={name}>
            <svg width="52" height="52" viewBox="0 0 52 52" fill="none" stroke={color.grey} strokeWidth="4" strokeLinecap="round" strokeLinejoin="round">
              {icon}
            </svg>
            {name}
          </Action>
        ))}
      </Actions>

      <Stroke width="26" height="370" viewBox="0 0 26 370" aria-hidden="true">
        <path d="M26 0C18 50 15 90 14 150c0 50 0 60-4 110-3 30-5 50-8 75 0 6 5 8 5 10 2 8 4 18 7 22 4 4 9 2 10-2l-2-30c0-20 3-40 4-60z" fill="#ff0000" />
      </Stroke>
    </Page>
  );
}
